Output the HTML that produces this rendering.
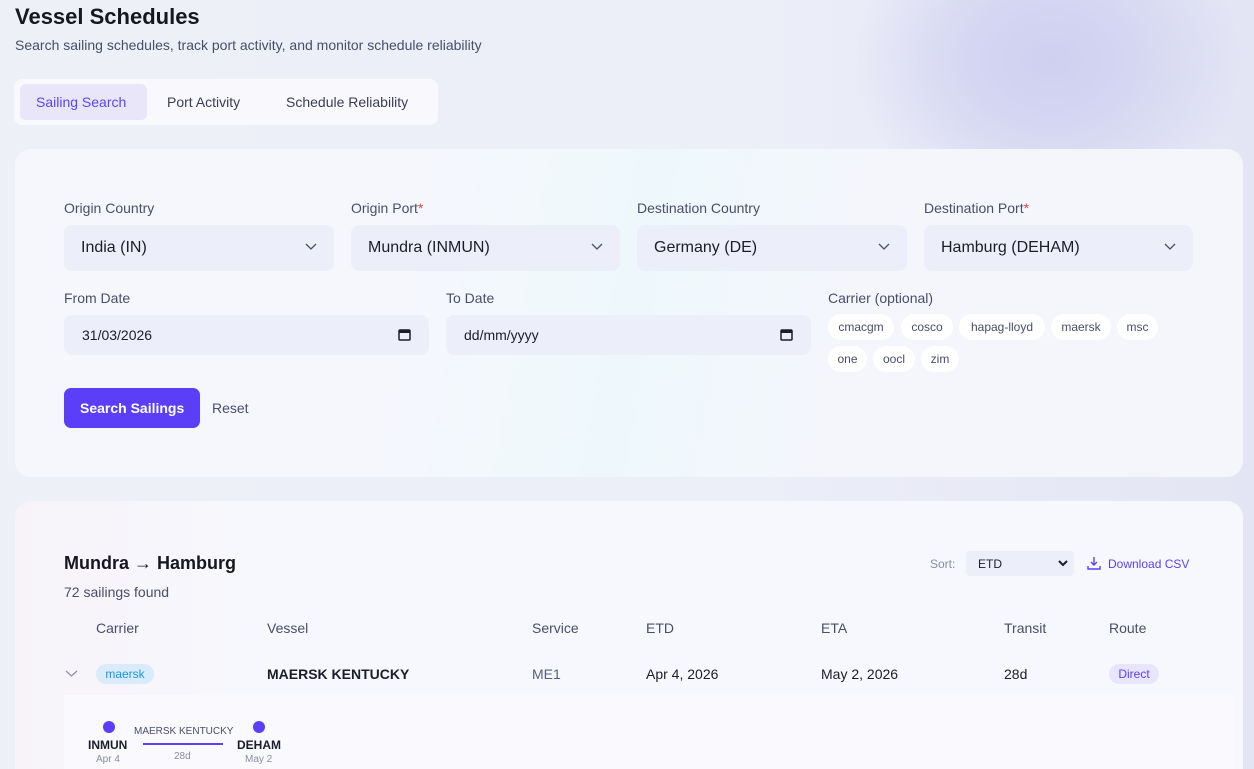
<!DOCTYPE html>
<html style="overflow:hidden;height:769px"><head><meta charset="utf-8"><style>
*{box-sizing:border-box;margin:0;padding:0}
body{width:1254px;height:769px;overflow:hidden;font-family:"Liberation Sans",sans-serif;position:relative;
background:radial-gradient(ellipse 200px 160px at 1052px 60px,#cfcff0 0%,#d6d7f2 45%,rgba(225,227,245,0) 100%),linear-gradient(90deg,#eef0f8 0%,#eceef8 60%,#e4e5f4 100%);color:#1c1d2b}
.a{position:absolute;white-space:nowrap}
.card{position:absolute;background:rgba(247,248,253,0.95);border-radius:16px}
.lbl{font-size:14px;color:#4a4e68}
.sel{position:absolute;height:46px;background:#eceff9;border-radius:8px;font-size:16px;color:#1c1d2b;padding:14px 17px}
.sel svg{position:absolute;right:17px;top:18px}
.chip{position:absolute;height:26px;background:#fff;border-radius:13px;font-size:12px;color:#4a4e68;padding:6px 0;text-align:center}
.th{font-size:14px;color:#4a4e68}
.td{font-size:14px;color:#1c1d2b}
</style></head><body>
<div class="a" style="left:15px;top:4px;font-size:22px;font-weight:bold;color:#16171f">Vessel Schedules</div>
<div class="a" style="left:15px;top:37px;font-size:14px;color:#4a4e68">Search sailing schedules, track port activity, and monitor schedule reliability</div>
<div class="a" style="left:14px;top:79px;width:424px;height:46px;background:#f9f9fd;border-radius:8px"></div>
<div class="a" style="left:20px;top:84px;width:127px;height:36px;background:#e8e6f8;border-radius:6px"></div>
<div class="a" style="left:36px;top:94px;font-size:14px;color:#5a46f0">Sailing Search</div>
<div class="a" style="left:167px;top:94px;font-size:14px;color:#3a3d55">Port Activity</div>
<div class="a" style="left:286px;top:94px;font-size:14px;color:#3a3d55">Schedule Reliability</div>

<div class="card" style="left:15px;top:149px;width:1228px;height:328px;background:linear-gradient(100deg,#f6f7fd 30%,#eef8fc 50%,#f5f6fc 70%)"></div>
<div class="a lbl" style="left:64px;top:200px">Origin Country</div>
<div class="a lbl" style="left:351px;top:200px">Origin Port<span style="color:#ef4444">*</span></div>
<div class="a lbl" style="left:637px;top:200px">Destination Country</div>
<div class="a lbl" style="left:924px;top:200px">Destination Port<span style="color:#ef4444">*</span></div>
<div class="sel" style="left:64px;top:225px;width:270px">India (IN)<svg width="12" height="8" viewBox="0 0 12 8"><path d="M1 1l5 5 5-5" stroke="#4a4e68" fill="none" stroke-width="1.3"/></svg></div>
<div class="sel" style="left:351px;top:225px;width:269px">Mundra (INMUN)<svg width="12" height="8" viewBox="0 0 12 8"><path d="M1 1l5 5 5-5" stroke="#4a4e68" fill="none" stroke-width="1.3"/></svg></div>
<div class="sel" style="left:637px;top:225px;width:270px">Germany (DE)<svg width="12" height="8" viewBox="0 0 12 8"><path d="M1 1l5 5 5-5" stroke="#4a4e68" fill="none" stroke-width="1.3"/></svg></div>
<div class="sel" style="left:924px;top:225px;width:269px">Hamburg (DEHAM)<svg width="12" height="8" viewBox="0 0 12 8"><path d="M1 1l5 5 5-5" stroke="#4a4e68" fill="none" stroke-width="1.3"/></svg></div>
<div class="a lbl" style="left:64px;top:290px">From Date</div>
<div class="a lbl" style="left:446px;top:290px">To Date</div>
<div class="a lbl" style="left:828px;top:290px">Carrier (optional)</div>
<div class="sel" style="left:64px;top:315px;width:365px;height:40px;font-size:14px;padding:12px 18px">31/03/2026<svg style="top:13px;right:18px" width="13" height="13" viewBox="0 0 13 13"><rect x="1" y="2" width="11" height="10" rx="1" fill="none" stroke="#1c1d2b" stroke-width="1.5"/><rect x="1" y="2" width="11" height="3" fill="#1c1d2b"/></svg></div>
<div class="sel" style="left:446px;top:315px;width:365px;height:40px;font-size:14px;padding:12px 18px">dd/mm/yyyy<svg style="top:13px;right:18px" width="13" height="13" viewBox="0 0 13 13"><rect x="1" y="2" width="11" height="10" rx="1" fill="none" stroke="#1c1d2b" stroke-width="1.5"/><rect x="1" y="2" width="11" height="3" fill="#1c1d2b"/></svg></div>
<div class="chip" style="left:828px;top:314px;width:66px">cmacgm</div>
<div class="chip" style="left:901px;top:314px;width:52px">cosco</div>
<div class="chip" style="left:959px;top:314px;width:86px">hapag-lloyd</div>
<div class="chip" style="left:1051px;top:314px;width:60px">maersk</div>
<div class="chip" style="left:1117px;top:314px;width:41px">msc</div>
<div class="chip" style="left:828px;top:346px;width:39px">one</div>
<div class="chip" style="left:873px;top:346px;width:42px">oocl</div>
<div class="chip" style="left:921px;top:346px;width:38px">zim</div>
<div class="a" style="left:64px;top:388px;width:136px;height:40px;background:#5b3ff8;border-radius:7px;color:#fff;font-size:14px;font-weight:bold;padding:12px 16px">Search Sailings</div>
<div class="a" style="left:212px;top:400px;font-size:14px;color:#4a4e68">Reset</div>

<div class="card" style="left:15px;top:501px;width:1228px;height:268px;border-radius:16px 16px 0 0;background:linear-gradient(90deg,#f7f3f9 0%,#f7f8fd 20%)"></div>
<div class="a" style="left:64px;top:553px;font-size:18px;font-weight:bold;color:#16171f">Mundra → Hamburg</div>
<div class="a" style="left:64px;top:584px;font-size:14px;color:#4a4e68">72 sailings found</div>
<div class="a" style="left:930px;top:557px;font-size:12px;color:#8a8da3">Sort:</div>
<div class="a" style="left:966px;top:551px;width:108px;height:25px;background:#eceff9;border-radius:4px;font-size:12px;padding:6px 12px">ETD<svg style="position:absolute;right:6px;top:9px" width="10" height="7" viewBox="0 0 10 7"><path d="M1 1l4 4 4-4" stroke="#1c1d2b" fill="none" stroke-width="2"/></svg></div>
<svg class="a" style="left:1087px;top:556px" width="14" height="14" viewBox="0 0 14 14"><path d="M7 1v8M4 6l3 3 3-3M1 10v3h12v-3" stroke="#5b3ff8" fill="none" stroke-width="1.4"/></svg>
<div class="a" style="left:1108px;top:557px;font-size:12px;color:#5b3ff8">Download CSV</div>
<div class="a th" style="left:96px;top:620px">Carrier</div>
<div class="a th" style="left:267px;top:620px">Vessel</div>
<div class="a th" style="left:532px;top:620px">Service</div>
<div class="a th" style="left:646px;top:620px">ETD</div>
<div class="a th" style="left:821px;top:620px">ETA</div>
<div class="a th" style="left:1004px;top:620px">Transit</div>
<div class="a th" style="left:1109px;top:620px">Route</div>
<svg class="a" style="left:65px;top:670px" width="13" height="8" viewBox="0 0 13 8"><path d="M1 1l5.5 5 5.5-5" stroke="#8a8da3" fill="none" stroke-width="1.2"/></svg>
<div class="a" style="left:96px;top:664px;height:20px;width:58px;text-align:center;background:#d8ecfb;border-radius:10px;padding:3px 0;font-size:12px;color:#1a95e6">maersk</div>
<div class="a td" style="left:267px;top:666px;font-weight:bold">MAERSK KENTUCKY</div>
<div class="a td" style="left:532px;top:666px;color:#5a5e78">ME1</div>
<div class="a td" style="left:646px;top:666px">Apr 4, 2026</div>
<div class="a td" style="left:821px;top:666px">May 2, 2026</div>
<div class="a td" style="left:1004px;top:666px">28d</div>
<div class="a" style="left:1109px;top:664px;height:20px;width:50px;text-align:center;background:#e8e5fc;border-radius:10px;padding:3px 0;font-size:12px;color:#5b3ff8">Direct</div>
<div class="a" style="left:64px;top:695px;width:1170px;height:80px;background:#f9f9fe"></div>
<div class="a" style="left:103px;top:721px;width:12px;height:12px;border-radius:6px;background:#5b3ff8"></div>
<div class="a" style="left:253px;top:721px;width:12px;height:12px;border-radius:6px;background:#5b3ff8"></div>
<div class="a" style="left:88px;top:738px;font-size:12px;font-weight:bold">INMUN</div>
<div class="a" style="left:96px;top:754px;font-size:10px;color:#8a8da3">Apr 4</div>
<div class="a" style="left:134px;top:726px;font-size:10px;color:#4a4e68">MAERSK KENTUCKY</div>
<div class="a" style="left:143px;top:743px;width:80px;height:2px;background:#5b3ff8"></div>
<div class="a" style="left:174px;top:751px;font-size:10px;color:#8a8da3">28d</div>
<div class="a" style="left:237px;top:738px;font-size:12px;font-weight:bold">DEHAM</div>
<div class="a" style="left:245px;top:754px;font-size:10px;color:#8a8da3">May 2</div>
</body></html>
